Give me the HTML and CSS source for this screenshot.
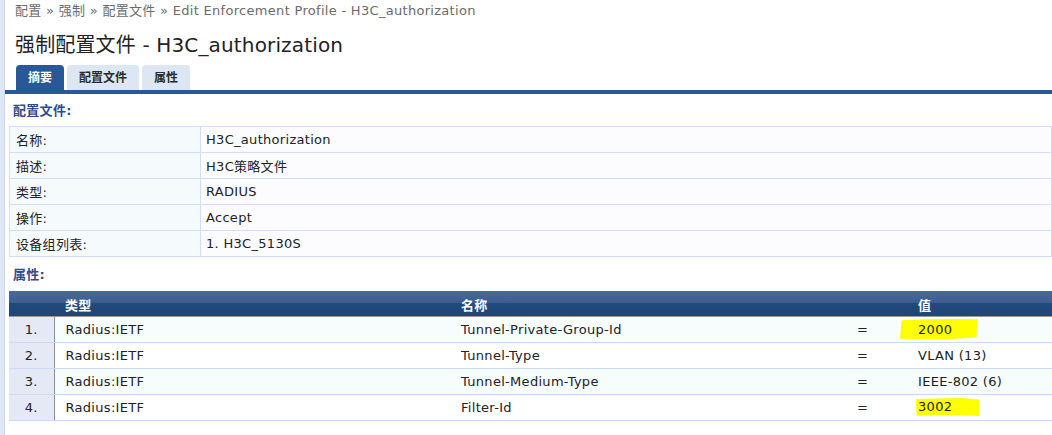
FILE: index.html
```html
<!DOCTYPE html>
<html lang="zh-CN">
<head>
    <meta charset="UTF-8">
    <title>强制配置文件 - H3C_authorization</title>
    <link rel="stylesheet" href="styles.css">
</head>
<body>
    <div class="page">
        <div class="breadcrumb">配置 » 强制 » 配置文件 » Edit Enforcement Profile - H3C_authorization</div>
        <h1 class="title">强制配置文件 - H3C_authorization</h1>

        <div class="tabbar">
            <span class="tab active">摘要</span>
            <span class="tab">配置文件</span>
            <span class="tab">属性</span>
        </div>

        <div class="section-title">配置文件:</div>
        <table class="summary">
            <colgroup><col class="col-label"><col></colgroup>
            <tr><td class="label">名称:</td><td>H3C_authorization</td></tr>
            <tr><td class="label">描述:</td><td>H3C策略文件</td></tr>
            <tr><td class="label">类型:</td><td>RADIUS</td></tr>
            <tr><td class="label">操作:</td><td>Accept</td></tr>
            <tr><td class="label">设备组列表:</td><td>1. H3C_5130S</td></tr>
        </table>

        <div class="section-title">属性:</div>
        <table class="attrs">
            <colgroup>
                <col class="col-num"><col class="col-type"><col class="col-name"><col class="col-eq"><col>
            </colgroup>
            <thead>
                <tr><th></th><th>类型</th><th>名称</th><th></th><th>值</th></tr>
            </thead>
            <tbody>
                <tr><td class="num">1.</td><td>Radius:IETF</td><td>Tunnel-Private-Group-Id</td><td class="eq">=</td><td><span class="mark mark-a">2000</span></td></tr>
                <tr><td class="num">2.</td><td>Radius:IETF</td><td>Tunnel-Type</td><td class="eq">=</td><td>VLAN (13)</td></tr>
                <tr><td class="num">3.</td><td>Radius:IETF</td><td>Tunnel-Medium-Type</td><td class="eq">=</td><td>IEEE-802 (6)</td></tr>
                <tr><td class="num">4.</td><td>Radius:IETF</td><td>Filter-Id</td><td class="eq">=</td><td><span class="mark mark-b">3002</span></td></tr>
            </tbody>
        </table>
    </div>
</body>
</html>
```

FILE: styles.css
```css
* {
    margin: 0;
    padding: 0;
    box-sizing: border-box;
}

body {
    font-family: 'DejaVu Sans', 'Noto Sans CJK SC', sans-serif;
    font-size: 13px;
    letter-spacing: 0.3px;
    color: #222;
    background: #fff;
    overflow: hidden;
}

.page {
    min-height: 100vh;
    border-left: 4px solid #dfe7f6;
    box-shadow: inset 1px 0 0 #c9d6ee;
}

.breadcrumb {
    color: #6b6b6b;
    line-height: 16px;
    padding: 3px 0 0 11px;
}

.title {
    font-size: 20px;
    font-weight: normal;
    line-height: 24px;
    letter-spacing: 0.15px;
    color: #222;
    margin: 14px 0 0 11px;
}

.tabbar {
    display: flex;
    gap: 3px;
    margin-top: 8px;
    padding-left: 11px;
    margin-left: 1px;
    border-bottom: 4px solid #2a5798;
}

.tab {
    display: inline-block;
    height: 25px;
    line-height: 26px;
    padding: 0 12px;
    font-size: 12px;
    font-weight: bold;
    letter-spacing: 0;
    color: #2b2b2b;
    background: #dde6f3;
    border-radius: 4px 4px 0 0;
}

.tab.active {
    background: #2a5798;
    color: #fff;
}

.section-title {
    font-weight: bold;
    color: #2d4c8f;
    line-height: 16px;
    padding-left: 9px;
    margin: 9px 0 7px;
}

table {
    border-collapse: collapse;
    table-layout: fixed;
    margin-left: 5px;
    width: calc(100% - 5px);
}

.summary td {
    height: 26px;
    border: 1px solid #d2def5;
    background: #fcfcff;
    padding: 0 5px;
    white-space: nowrap;
}

.summary td.label {
    background: #f5fbfd;
    padding-left: 6px;
}

.col-label { width: 191px; }

.summary + .section-title {
    margin: 10px 0 8px;
}

.attrs th {
    height: 25px;
    text-align: left;
    color: #fff;
    font-weight: bold;
    padding: 3px 11px 0;
    background: linear-gradient(#4a6a9b 0%, #3c5d90 46%, #214a7c 50%, #1e4677 100%);
    border-bottom: 1px solid #9a9a9a;
}

.attrs td {
    height: 26px;
    padding: 0 11px;
    border-bottom: 1px solid #c9dbf8;
    white-space: nowrap;
}

.attrs td.eq {
    padding-left: 7px;
}

.attrs tbody tr:nth-child(odd) td { background: #f7fdfd; }
.attrs tbody tr:nth-child(even) td { background: #fff; }

.attrs td.num {
    text-align: center;
    padding: 0;
    background: #e4e9f5 !important;
    border-right: 1px solid #8c8c8c;
}

.col-num { width: 45px; }
.col-type { width: 396px; }
.col-name { width: 400px; }
.col-eq { width: 57px; }

.mark {
    display: inline-block;
    background: #ffff00;
}

.mark-a {
    margin-left: -18px;
    padding: 3px 25px 3px 18px;
    clip-path: polygon(2% 8%, 60% 0, 100% 4%, 99% 90%, 55% 100%, 0 96%);
}

.mark-b {
    margin-left: -2px;
    padding: 1px 27px 2px 2px;
    clip-path: polygon(0 6%, 70% 0, 100% 8%, 100% 100%, 40% 94%, 1% 98%);
}
```
